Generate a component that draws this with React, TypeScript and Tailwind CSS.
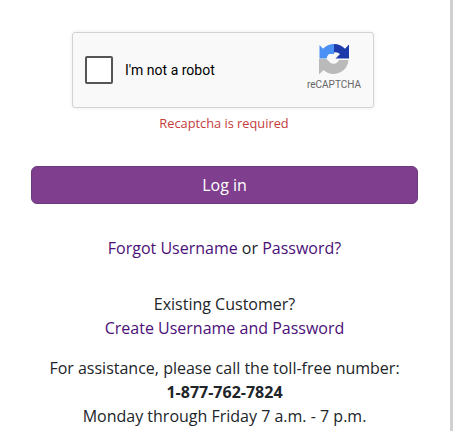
export default function App() {
  return (
    <div className="flex h-[431px] w-[453px] overflow-hidden bg-white font-['Open_Sans',sans-serif] text-[#212529]">
      <div className="flex w-[449px] flex-col items-center pt-8">
        <div className="ml-[72px] flex h-[76px] w-[302px] items-center justify-between self-start rounded-[3px] border border-[#d3d3d3] bg-[#f9f9f9] px-[12px] shadow-[0_0_4px_rgba(0,0,0,0.08)]">
          <div className="flex items-center gap-3">
            <div className="h-7 w-7 rounded-[2px] border-2 border-[#555] bg-white" />
            <span className="font-['Roboto',sans-serif] text-sm text-black">I'm not a robot</span>
          </div>
          <div className="flex flex-col items-center pb-[6px]">
            <svg width="32" height="32" viewBox="0 0 32 32">
              <path d="M16 1 A15 15 0 0 1 27 5.8 L31 1.5 L31 15.5 L17.5 15.5 L22 11 A7 7 0 0 0 16 9.5 Z" fill="#1c3aa9" />
              <path d="M16 1 A15 15 0 0 0 5 5.8 L1.5 2 L1.5 15.5 L8.5 15.5 A8 8 0 0 1 11 11 L16 11 Z" fill="#4a90f5" />
              <path d="M1 16 L8.5 16 L12.5 20 A6 6 0 0 0 21 17 L30.5 17 A15 15 0 0 1 5.5 27 L1 31.5 Z" fill="#bababa" />
            </svg>
            <span className="mt-1 font-['Roboto',sans-serif] text-[10px] leading-[12px] text-[#666]">reCAPTCHA</span>
          </div>
        </div>
        <p className="mt-[6px] -translate-x-[0.5px] text-[12.8px] leading-[18px] text-[#c43c3c]">Recaptcha is required</p>
        <button className="mt-[34px] ml-[31px] h-[38px] w-[387px] self-start rounded-md border border-[#6a3a7c] bg-[#7f3f8e] text-base text-white">Log in</button>
        <a className="mt-8 text-base leading-6 text-[#4b0f78]">
          Forgot Username <span className="text-[#212529]">or</span> Password?
        </a>
        <p className="mt-8 text-center text-base leading-6">Existing Customer?</p>
        <a className="text-base leading-6 text-[#4b0f78]">Create Username and Password</a>
        <div className="mt-4 text-center text-base leading-6">
          <p>For assistance, please call the toll-free number:</p>
          <p className="font-bold">1-877-762-7824</p>
          <p>Monday through Friday 7 a.m. - 7 p.m.</p>
        </div>
      </div>
      <div className="ml-px w-[3px] bg-[#d0d0d0]" />
    </div>
  );
}
